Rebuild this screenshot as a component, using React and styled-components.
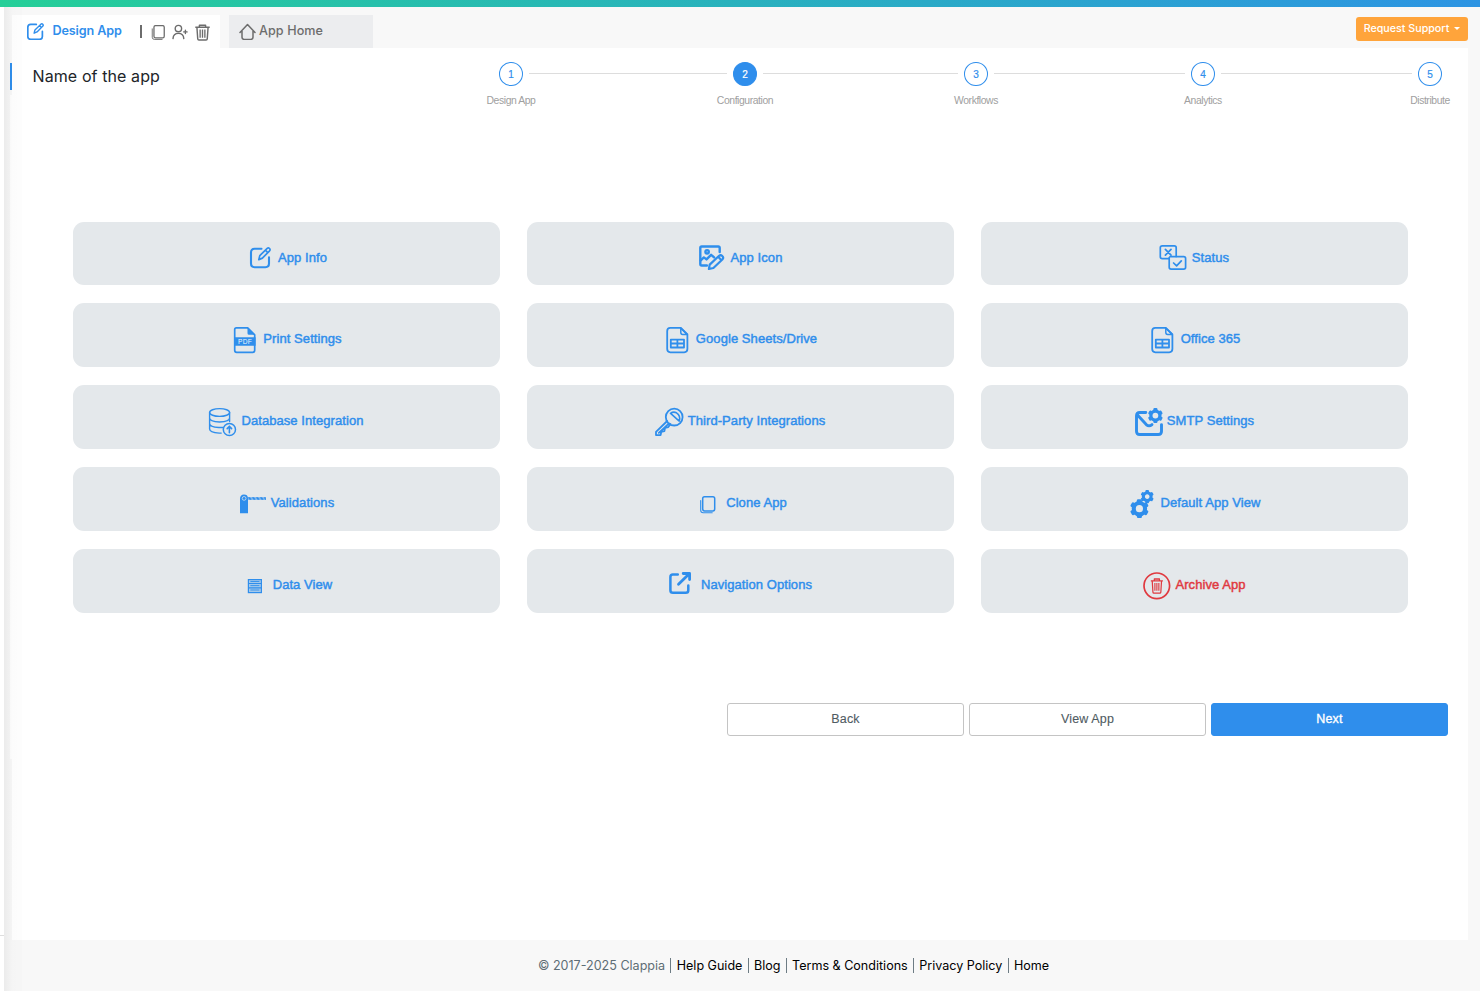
import React from "react";
import styled, { createGlobalStyle } from "styled-components";

const BLUE = "#2f8eec";
const RED = "#e0393f";

// 아이콘
const EditIcon = () => (
  <g fill="none" stroke="currentColor" strokeWidth="2.1" strokeLinecap="round" strokeLinejoin="round">
    <path d="M15.5 3.8H8.6Q5 3.8 5 7.4v11.2q0 3.6 3.6 3.6h10.8q3.6 0 3.6-3.6v-6.2" />
    <path strokeWidth="1.7" d="M12.8 14.6l1-4 7.4-7.2q1.2-1 2.3.1t.1 2.3l-7.2 7.3zM19.4 5.2l2.4 2.4" />
  </g>
);
const ImageIcon = () => (
  <g fill="none" stroke="currentColor" strokeWidth="2.4" strokeLinecap="round" strokeLinejoin="round" transform="translate(-.9 0)">
    <path d="M21.6 7V2.9q0-1.4-1.4-1.4H3.6q-1.4 0-1.4 1.4v16.2q0 1.4 1.4 1.4h5.2" />
    <circle cx="9" cy="6.8" r="1.7" />
    <path d="M2.6 15.4l3.2-3 2.6 2 4.6-4.6 3 2.6" />
    <path strokeWidth="2.2" d="M10.8 24l.8-4.4 9.4-8.8q1.6-1.2 3.2.2t.3 3.2l-9.2 8.8zM20 11.8l3.4 3.4" />
  </g>
);
const StatusIcon = () => (
  <g fill="none" stroke="currentColor" strokeWidth="1.7" strokeLinecap="round" strokeLinejoin="round" transform="translate(-.6 0)">
    <path d="M9.8 13.6H2.8Q.9 13.6.9 11.7V2.8Q.9.9 2.8.9h12.1q1.9 0 1.9 1.9v8.6" />
    <path d="M9.8 12.6v9.6q0 1.9 1.9 1.9h12.6q1.9 0 1.9-1.9v-8.6q0-1.9-1.9-1.9H10.7" />
    <path d="M6 4.4l5.6 5.8M11.6 4.4L6 10.2M14.2 18l3 2.9 4.7-5" />
  </g>
);
const PdfIcon = () => (
  <g transform="translate(.5 0)">
    <path
      fill="none"
      stroke="currentColor"
      strokeWidth="1.7"
      strokeLinejoin="round"
      d="M4.8 1.9h11.4l7 7v15.4q0 2-2 2H5.2q-2 0-2-2V3.6q0-1.7 1.6-1.7z"
    />
    <path fill="currentColor" d="M16 1.6v5.6q0 1.6 1.6 1.6h6zM2.5 11.3h21.6v8.4H2.5z" />
    <text x="13.5" y="17.9" fill="#f2f6fa" fontSize="6.6" textAnchor="middle" letterSpacing=".3" fontFamily="Liberation Sans, sans-serif">
      PDF
    </text>
  </g>
);
const SheetIcon = () => (
  <g fill="none" stroke="currentColor" strokeWidth="1.8" strokeLinejoin="round" transform="translate(.2 0)">
    <path d="M6 1.9h10.6l6.6 6.6v14.6q0 3.2-3.2 3.2H6.2Q3 26.3 3 23.1V4.9q0-3 3-3z" />
    <path d="M16.6 2v4.6q0 1.8 1.8 1.8H23z" fill="none" strokeWidth="1.5" />
    <path d="M6.6 13.6h13.2v7.9H6.6zM6.6 17.5h13.2M13.2 13.6v7.9" />
  </g>
);
const DatabaseIcon = () => (
  <g fill="none" stroke="currentColor" strokeWidth="1.4" strokeLinecap="round" transform="translate(-.2 -.1)">
    <ellipse cx="10.8" cy="4.6" rx="10" ry="3.9" />
    <path d="M.8 4.6v16.6q0 3.4 9.6 4h2M20.8 4.6v9M.8 10.2q0 3.6 10 3.9 10-.3 10-3.9M.8 15.6q0 3.6 9.2 4h4" />
    <circle cx="20.6" cy="21.6" r="6.1" strokeWidth="1.5" />
    <path d="M20.6 24.8v-6.2M18.4 20.7l2.2-2.3 2.2 2.3" strokeWidth="1.6" />
  </g>
);
const KeyIcon = () => (
  <g fill="none" stroke="currentColor" strokeWidth="1.8" strokeLinejoin="round" strokeLinecap="round" transform="translate(-.8 0)">
    <circle cx="19" cy="9.1" r="8.4" />
    <path strokeWidth="1.6" d="M15.3 5.4q2.8-2.2 6-.6 4.5 3 2.7 8.3L15.4 5.4z" />
    <path d="M12 13L.8 23.8v3.3h4.6l.7-3.2 3.1-.7.6-3.2 3.3-.9 2.2-3.2M3.6 24.8l10.2-9.4" />
  </g>
);
// 톱니바퀴
const Gear = ({ cx, cy, r, hole }) => {
  const body = r * 0.82;
  return (
    <g transform={`translate(${cx} ${cy})`}>
      <circle r={(body + hole) / 2} fill="none" stroke="currentColor" strokeWidth={body - hole} />
      {[0, 60, 120, 180, 240, 300].map((deg) => (
        <rect key={deg} x={-r * 0.27} y={-r} width={r * 0.54} height={r * 0.42} rx={r * 0.14} fill="currentColor" transform={`rotate(${deg})`} />
      ))}
    </g>
  );
};
const MailGearIcon = () => (
  <g>
    <g fill="none" stroke="currentColor" strokeWidth="2.9" strokeLinecap="round" strokeLinejoin="round">
      <path d="M10.8 4.5h-6Q1.5 4.5 1.5 7.8v15.4q0 3.3 3.3 3.3h18.4q3.3 0 3.3-3.3v-6.6" />
      <path d="M2.5 7l9 9.8q2.6 2.2 5.5-.2" />
    </g>
    <Gear cx={20.4} cy={7.6} r={7.5} hole={2.9} />
  </g>
);
const BarrierIcon = () => (
  <g fill="currentColor">
    <path d="M1 9Q1 4.4 5 4.4q3.6 0 4 3.4v15.4H1z" />
    <circle cx="5.1" cy="8.4" r="1.9" fill="none" stroke="#e4e8eb" strokeWidth=".7" />
    <path d="M8.5 7.2H27v2.6H8.5z" opacity=".6" />
    <path d="M9 7.2h2l1.6 2.6h-2zM13 7.2h2l1.6 2.6h-2zM17 7.2h2l1.6 2.6h-2zM21 7.2h2l1.6 2.6h-2zM25 7.2h1.6l.4 2.6h-1z" />
  </g>
);
const CloneIcon = () => (
  <g fill="none" stroke="currentColor" strokeWidth="1.5" strokeLinecap="round">
    <rect x="8.7" y="6.7" width="12" height="14.2" rx="1.8" />
    <path strokeWidth="1.1" d="M6.7 10.5v9.8q0 2.5 2.5 2.5h9" />
  </g>
);
const GearsIcon = () => (
  <g>
    <Gear cx={10.4} cy={18.7} r={9.4} hole={3.6} />
    <Gear cx={18.2} cy={6.6} r={6.6} hole={2.3} />
  </g>
);
const ListIcon = () => (
  <g>
    <rect x="7.4" y="7.6" width="13" height="13" fill="currentColor" fillOpacity=".35" stroke="currentColor" strokeWidth="1.2" />
    <path stroke="currentColor" strokeWidth="1.2" d="M7 11.5h13.6M7 15.9h13.6" />
    <path stroke="currentColor" strokeWidth=".9" d="M9.4 9.5h9M9.4 13.6h9M9.4 18h9" />
  </g>
);
const ExternalIcon = () => (
  <g fill="none" stroke="currentColor" strokeWidth="2.5" strokeLinecap="round" strokeLinejoin="round">
    <path d="M8.8 2.5H3.9q-2.5 0-2.5 2.4v13.3q0 2.6 2.6 2.6h12.8q2.5 0 2.5-2.6v-4.6" />
    <path d="M9.5 12.3L20 2M14.2 1.5h6.4v6" strokeWidth="2.8" />
  </g>
);
const TrashCan = () => (
  <g fill="none" stroke="currentColor" strokeWidth="1.4" strokeLinejoin="round">
    <path d="M1 3.2h14M5 3V1.2h6V3M2.6 3.4l.8 11.2q.1 1 1.1 1h7q1 0 1.1-1l.8-11.2" />
    <path d="M5.7 5.4v7.9M8 5.4v7.9M10.3 5.4v7.9" strokeWidth="1.3" />
  </g>
);
const ArchiveIcon = () => (
  <g>
    <circle cx="13.8" cy="13.8" r="12.8" fill="none" stroke="currentColor" strokeWidth="1.7" />
    <g transform="translate(7 5.8) scale(.86 .98)">
      <TrashCan />
    </g>
  </g>
);

const steps = [
  { name: "Design App", line: 198 },
  { name: "Configuration", line: 195, active: true },
  { name: "Workflows", line: 191 },
  { name: "Analytics", line: 191 },
  { name: "Distribute" },
];

const settings = [
  { name: "App Info", icon: EditIcon },
  { name: "App Icon", icon: ImageIcon },
  { name: "Status", icon: StatusIcon },
  { name: "Print Settings", icon: PdfIcon },
  { name: "Google Sheets/Drive", icon: SheetIcon },
  { name: "Office 365", icon: SheetIcon },
  { name: "Database Integration", icon: DatabaseIcon },
  { name: "Third-Party Integrations", icon: KeyIcon },
  { name: "SMTP Settings", icon: MailGearIcon },
  { name: "Validations", icon: BarrierIcon },
  { name: "Clone App", icon: CloneIcon },
  { name: "Default App View", icon: GearsIcon },
  { name: "Data View", icon: ListIcon },
  { name: "Navigation Options", icon: ExternalIcon },
  { name: "Archive App", icon: ArchiveIcon, danger: true },
];

const links = ["Help Guide", "Blog", "Terms & Conditions", "Privacy Policy", "Home"];

function App() {
  return (
    <>
      <GlobalStyle />
      <Wrapper>
        <TopBar />
        <Body>
          <Side>
            <SideLine />
          </Side>
          <Main>
            <Tabs>
              <Tab $active>
                <TabIcon viewBox="4 2 21 21" $size={17}>
                  <EditIcon />
                </TabIcon>
                <TabName $active>Design App</TabName>
                <Divider />
                <Tools>
                  <TabIcon viewBox="6 6 16 17.5" $size={15}>
                    <CloneIcon />
                  </TabIcon>
                  <TabIcon viewBox="0 0 16 16" $size={16}>
                    <g fill="none" stroke="currentColor" strokeWidth="1.4" strokeLinecap="round">
                      <circle cx="6.4" cy="4.6" r="3.2" />
                      <path d="M1 14.6q.3-5.2 5.4-5.2t5.4 5.2M13.4 6.2v3.4M11.7 7.9h3.4" />
                    </g>
                  </TabIcon>
                  <TabIcon viewBox="0 0 16 16.5" $size={17}>
                    <TrashCan />
                  </TabIcon>
                </Tools>
              </Tab>
              <Tab>
                <TabIcon viewBox="0 0 17 17" $size={17}>
                  <path
                    fill="none"
                    stroke="currentColor"
                    strokeWidth="1.5"
                    strokeLinecap="round"
                    strokeLinejoin="round"
                    d="M1 9.4L8.5 1.6 16 9.4M3 8v6.2q0 2.2 2.2 2.2h6.6q2.2 0 2.2-2.2V8"
                  />
                </TabIcon>
                <TabName>App Home</TabName>
              </Tab>
              <Support>
                Request Support
                <Caret />
              </Support>
            </Tabs>
            <Panel>
              <Head>
                <Title>Name of the app</Title>
                <Stepper>
                  {steps.map((step, index) => (
                    <React.Fragment key={step.name}>
                      <Step>
                        <Circle $active={step.active}>{index + 1}</Circle>
                        <StepName>{step.name}</StepName>
                      </Step>
                      {step.line && <Line $width={step.line} />}
                    </React.Fragment>
                  ))}
                </Stepper>
              </Head>
              <Section>
                <Grid>
                  {settings.map(({ name, icon: Icon, danger }) => (
                    <Card key={name} $danger={danger}>
                      <CardIcon viewBox="0 0 28 28">
                        <Icon />
                      </CardIcon>
                      <CardName>{name}</CardName>
                    </Card>
                  ))}
                </Grid>
                <Buttons>
                  <Btn>Back</Btn>
                  <Btn>View App</Btn>
                  <Btn $primary>Next</Btn>
                </Buttons>
              </Section>
            </Panel>
            <Footer>
              <span>© 2017-2025 Clappia</span>
              {links.map((link) => (
                <React.Fragment key={link}>
                  <Bar />
                  <Link>{link}</Link>
                </React.Fragment>
              ))}
            </Footer>
            <Shade />
          </Main>
        </Body>
      </Wrapper>
    </>
  );
}

export default App;

const GlobalStyle = createGlobalStyle`
  * {
    box-sizing: border-box;
  }
  body {
    margin: 0;
    font-family: Inter, sans-serif;
  }
`;
const Wrapper = styled.div`
  display: flex;
  flex-direction: column;
  height: 991px;
  overflow: hidden;
  background-color: #ffffff;
`;
const TopBar = styled.div`
  height: 7px;
  background: linear-gradient(90deg, #25cf98, #2d94e3);
`;
const Body = styled.div`
  display: flex;
  flex: 1;
`;
const Side = styled.div`
  display: flex;
  flex-direction: column;
  justify-content: flex-end;
  width: 4px;
  padding-bottom: 55px;
`;
const SideLine = styled.div`
  height: 1px;
  background-color: #dedede;
`;
const Main = styled.main`
  position: relative;
  display: flex;
  flex-direction: column;
  flex: 1;
  padding: 8px 12px 0 8px;
  background-color: #f8f8f8;
`;
// 왼쪽 그림자
const Shade = styled.div`
  position: absolute;
  top: 0;
  bottom: 0;
  left: 0;
  width: 18px;
  pointer-events: none;
  background: linear-gradient(90deg, rgba(0, 0, 0, 0.05), rgba(0, 0, 0, 0.02) 7px, rgba(0, 0, 0, 0.012) 8px, rgba(0, 0, 0, 0.008));
`;
const Tabs = styled.div`
  display: flex;
  gap: 9px;
  height: 33px;
`;
const Tab = styled.div`
  display: flex;
  align-items: center;
  width: ${({ $active }) => ($active ? "208px" : "144px")};
  padding-left: ${({ $active }) => ($active ? "15px" : "10px")};
  color: ${({ $active }) => ($active ? BLUE : "#6c6c6c")};
  background-color: ${({ $active }) => ($active ? "#ffffff" : "#ecedef")};
`;
const TabIcon = styled.svg`
  flex: none;
  width: ${({ $size }) => $size}px;
  height: ${({ $size }) => $size}px;
`;
const TabName = styled.span`
  margin-left: ${({ $active }) => ($active ? "8.5px" : "3px")};
  padding-bottom: 1px;
  font-size: 12.6px;
  font-weight: ${({ $active }) => ($active ? 600 : 500)};
  letter-spacing: ${({ $active }) => ($active ? "-0.12px" : "0.08px")};
  line-height: 16px;
  white-space: nowrap;
`;
const Divider = styled.div`
  width: 2px;
  height: 13px;
  margin: 0 9px 0 18px;
  background-color: #6c6c6c;
`;
const Tools = styled.div`
  display: flex;
  align-items: center;
  gap: 6px;
  padding-top: 1px;
  color: #6c6c6c;
`;
const Support = styled.button`
  display: flex;
  align-items: center;
  justify-content: center;
  width: 112px;
  height: 24px;
  margin: 2px 0 0 auto;
  padding: 0 0 2px;
  border: 0;
  border-radius: 3px;
  font-family: inherit;
  font-size: 10.7px;
  font-weight: 500;
  white-space: nowrap;
  color: #ffffff;
  background-color: #ffa43b;
`;
const Caret = styled.span`
  margin-left: 5px;
  border: 3.5px solid transparent;
  border-top-color: #ffffff;
  border-bottom: 0;
`;
const Panel = styled.div`
  height: 892px;
  background-color: #ffffff;
`;
const Head = styled.div`
  display: flex;
  align-items: flex-start;
  justify-content: space-between;
  height: 47px;
  padding-right: 20px;
`;
const Title = styled.h1`
  height: 27px;
  margin: 15px 0 0 -2px;
  padding-left: 20.5px;
  border-left: 2px solid ${BLUE};
  font-size: 16px;
  font-weight: 400;
  line-height: 26px;
  letter-spacing: 0.1px;
  color: #212529;
`;
const Stepper = styled.div`
  display: flex;
  padding-top: 14px;
`;
const Step = styled.div`
  display: flex;
  flex-direction: column;
  align-items: center;
  width: 36px;
`;
const Circle = styled.div`
  width: 23.5px;
  height: 24px;
  border: 1px solid ${BLUE};
  border-radius: 50%;
  font-family: "Liberation Sans", sans-serif;
  font-size: 10px;
  line-height: 23px;
  text-align: center;
  -webkit-text-stroke: 0.2px currentColor;
  color: ${({ $active }) => ($active ? "#ffffff" : BLUE)};
  background-color: ${({ $active }) => ($active ? BLUE : "#ffffff")};
`;
const StepName = styled.div`
  margin-top: 8px;
  font-family: "Liberation Sans", sans-serif;
  font-size: 10.4px;
  line-height: 13px;
  letter-spacing: -0.42px;
  white-space: nowrap;
  color: #a0a0a0;
`;
const Line = styled.div`
  width: ${({ $width }) => $width}px;
  height: 1px;
  margin-top: 11px;
  background-color: #dddddd;
`;
const Section = styled.section`
  height: 664px;
  padding: 127px 20px 0 61px;
  background-color: #ffffff;
  box-shadow: -2px 0 0 #ffffff;
`;
const Grid = styled.div`
  display: grid;
  grid-template-columns: repeat(3, 427px);
  grid-template-rows: 63px repeat(4, 64px);
  gap: 18px 27px;
`;
const Card = styled.div`
  display: flex;
  align-items: flex-start;
  justify-content: center;
  gap: 4px;
  padding-top: 23px;
  border-radius: 11px;
  color: ${({ $danger }) => ($danger ? RED : BLUE)};
  background-color: #e4e8eb;
`;
const CardIcon = styled.svg`
  flex: none;
  width: 28px;
  height: 28px;
  overflow: visible;
`;
const CardName = styled.span`
  padding-top: 4px;
  font-family: "Liberation Sans", sans-serif;
  font-size: 13px;
  line-height: 18px;
  letter-spacing: 0.07px;
  white-space: nowrap;
  -webkit-text-stroke: 0.45px currentColor;
`;
const Buttons = styled.div`
  display: flex;
  justify-content: flex-end;
  gap: 5px;
  margin-top: 90px;
`;
const Btn = styled.button`
  width: 237px;
  height: 33px;
  padding: 0 0 2px;
  border: 1px solid ${({ $primary }) => ($primary ? BLUE : "#c4c4c4")};
  border-radius: 3px;
  font-family: "Liberation Sans", sans-serif;
  font-size: 12.5px;
  letter-spacing: 0.15px;
  -webkit-text-stroke: ${({ $primary }) => ($primary ? "0.35px" : "0.1px")} currentColor;
  color: ${({ $primary }) => ($primary ? "#ffffff" : "#4f5b62")};
  background-color: ${({ $primary }) => ($primary ? BLUE : "#ffffff")};
`;
const Footer = styled.footer`
  display: flex;
  align-items: center;
  justify-content: center;
  height: 51px;
  padding-left: 107px;
  font-size: 12.56px;
  white-space: nowrap;
  color: #5d6d75;
`;
const Bar = styled.span`
  width: 1px;
  height: 15px;
  margin: 0 5.3px;
  background-color: #6d7c84;
`;
const Link = styled.a`
  color: #000000;
`;
